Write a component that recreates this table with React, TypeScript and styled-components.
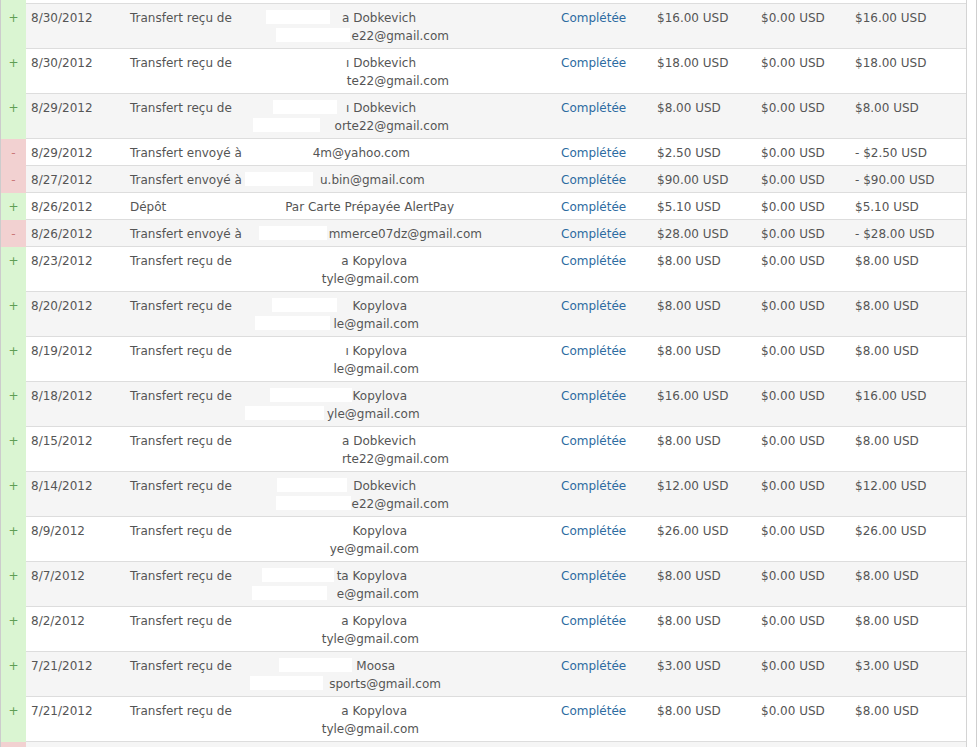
import React from 'react';
import styled, { createGlobalStyle } from 'styled-components';

const GlobalStyle = createGlobalStyle`
  html, body {
    margin: 0;
    padding: 0;
    background: #ffffff;
  }
`;

type Sign = '+' | '-';
type Mask = { w: number; gap: number };

interface PartyLine {
  text: string;
  end: number;
  mask?: Mask;
}

interface Txn {
  sign: Sign;
  date: string;
  kind: string;
  party: PartyLine[];
  amount: string;
  net: string;
}

// right edge of the party column, in page pixels
const PARTY_RIGHT = 556;
const COLUMNS = [25, 99, 120, 311, 96, 104, 94, 116];

const rows: Txn[] = [
  { sign: '+', date: '8/30/2012', kind: 'Transfert reçu de', party: [{ text: 'a Dobkevich', end: 416, mask: { w: 64, gap: 12 } }, { text: 'e22@gmail.com', end: 449, mask: { w: 74, gap: 2 } }], amount: '$16.00 USD', net: '$16.00 USD' },
  { sign: '+', date: '8/30/2012', kind: 'Transfert reçu de', party: [{ text: 'ı Dobkevich', end: 416 }, { text: 'te22@gmail.com', end: 449 }], amount: '$18.00 USD', net: '$18.00 USD' },
  { sign: '+', date: '8/29/2012', kind: 'Transfert reçu de', party: [{ text: 'ı Dobkevich', end: 416, mask: { w: 64, gap: 9 } }, { text: 'orte22@gmail.com', end: 449, mask: { w: 67, gap: 15 } }], amount: '$8.00 USD', net: '$8.00 USD' },
  { sign: '-', date: '8/29/2012', kind: 'Transfert envoyé à', party: [{ text: '4m@yahoo.com', end: 410 }], amount: '$2.50 USD', net: '- $2.50 USD' },
  { sign: '-', date: '8/27/2012', kind: 'Transfert envoyé à', party: [{ text: 'u.bin@gmail.com', end: 421, mask: { w: 68, gap: 7 } }], amount: '$90.00 USD', net: '- $90.00 USD' },
  { sign: '+', date: '8/26/2012', kind: 'Dépôt', party: [{ text: 'Par Carte Prépayée AlertPay', end: 454 }], amount: '$5.10 USD', net: '$5.10 USD' },
  { sign: '-', date: '8/26/2012', kind: 'Transfert envoyé à', party: [{ text: 'mmerce07dz@gmail.com', end: 482, mask: { w: 68, gap: 2 } }], amount: '$28.00 USD', net: '- $28.00 USD' },
  { sign: '+', date: '8/23/2012', kind: 'Transfert reçu de', party: [{ text: 'a Kopylova', end: 407 }, { text: 'tyle@gmail.com', end: 419 }], amount: '$8.00 USD', net: '$8.00 USD' },
  { sign: '+', date: '8/20/2012', kind: 'Transfert reçu de', party: [{ text: 'Kopylova', end: 407, mask: { w: 65, gap: 16 } }, { text: 'le@gmail.com', end: 419, mask: { w: 75, gap: 4 } }], amount: '$8.00 USD', net: '$8.00 USD' },
  { sign: '+', date: '8/19/2012', kind: 'Transfert reçu de', party: [{ text: 'ı Kopylova', end: 407 }, { text: 'le@gmail.com', end: 419 }], amount: '$8.00 USD', net: '$8.00 USD' },
  { sign: '+', date: '8/18/2012', kind: 'Transfert reçu de', party: [{ text: 'Kopylova', end: 407, mask: { w: 82, gap: 1 } }, { text: 'yle@gmail.com', end: 419, mask: { w: 79, gap: 3 } }], amount: '$16.00 USD', net: '$16.00 USD' },
  { sign: '+', date: '8/15/2012', kind: 'Transfert reçu de', party: [{ text: 'a Dobkevich', end: 416 }, { text: 'rte22@gmail.com', end: 449 }], amount: '$8.00 USD', net: '$8.00 USD' },
  { sign: '+', date: '8/14/2012', kind: 'Transfert reçu de', party: [{ text: 'Dobkevich', end: 416, mask: { w: 70, gap: 6 } }, { text: 'e22@gmail.com', end: 449, mask: { w: 75, gap: 1 } }], amount: '$12.00 USD', net: '$12.00 USD' },
  { sign: '+', date: '8/9/2012', kind: 'Transfert reçu de', party: [{ text: 'Kopylova', end: 407 }, { text: 'ye@gmail.com', end: 419 }], amount: '$26.00 USD', net: '$26.00 USD' },
  { sign: '+', date: '8/7/2012', kind: 'Transfert reçu de', party: [{ text: 'ta Kopylova', end: 407, mask: { w: 72, gap: 3 } }, { text: 'e@gmail.com', end: 419, mask: { w: 75, gap: 10 } }], amount: '$8.00 USD', net: '$8.00 USD' },
  { sign: '+', date: '8/2/2012', kind: 'Transfert reçu de', party: [{ text: 'a Kopylova', end: 407 }, { text: 'tyle@gmail.com', end: 419 }], amount: '$8.00 USD', net: '$8.00 USD' },
  { sign: '+', date: '7/21/2012', kind: 'Transfert reçu de', party: [{ text: 'Moosa', end: 395, mask: { w: 73, gap: 4 } }, { text: 'sports@gmail.com', end: 441, mask: { w: 73, gap: 6 } }], amount: '$3.00 USD', net: '$3.00 USD' },
  { sign: '+', date: '7/21/2012', kind: 'Transfert reçu de', party: [{ text: 'a Kopylova', end: 407 }, { text: 'tyle@gmail.com', end: 419 }], amount: '$8.00 USD', net: '$8.00 USD' },
];

const signBg = (s: Sign) => (s === '+' ? '#daf5d2' : '#f2d1d1');

const Viewport = styled.div`
  width: 977px;
  height: 747px;
  overflow: hidden;
  box-sizing: border-box;
  border-right: 1px solid #cfcfcf;
  padding-right: 8px;
  font-family: 'DejaVu Sans', 'Liberation Sans', sans-serif;
  font-size: 12px;
  color: #555555;
`;

const Table = styled.table`
  width: 967px;
  border-collapse: separate;
  border-spacing: 0;
  table-layout: fixed;
  border-left: 1px solid #cccccc;
  border-right: 1px solid #d4d4d4;
`;

const Col = styled.col<{ $w: number }>`
  width: ${p => p.$w}px;
`;

const Row = styled.tr<{ $striped: boolean }>`
  background: ${p => (p.$striped ? '#f5f5f5' : '#ffffff')};
`;

const Cell = styled.td`
  padding: 5px 5px 3px;
  line-height: 18px;
  vertical-align: top;
  border-bottom: 1px solid #dddddd;
  white-space: nowrap;
`;

const SignCell = styled(Cell)<{ $sign: Sign }>`
  padding-left: 0;
  padding-right: 0;
  text-align: center;
  background: ${p => signBg(p.$sign)};
  border-bottom-color: ${p => signBg(p.$sign)};
  color: ${p => (p.$sign === '+' ? '#5f9e55' : '#c97a7a')};
`;

/* the sliver of a neighbouring row that shows at the top and bottom edge */
const EdgeCell = styled.td<{ $h: number; $sign?: Sign }>`
  height: ${p => p.$h}px;
  padding: 0;
  font-size: 0;
  line-height: 0;
  border-bottom: 1px solid #dddddd;
  ${p => p.$sign && `background: ${signBg(p.$sign)}; border-bottom-color: ${signBg(p.$sign)};`}
`;

const PartyCell = styled(Cell)`
  padding-left: 0;
  padding-right: 0;
`;

const PartyText = styled.div<{ $end: number }>`
  text-align: right;
  padding-right: ${p => PARTY_RIGHT - p.$end}px;
  height: 18px;
`;

const Redaction = styled.span<{ $w: number; $gap: number }>`
  display: inline-block;
  width: ${p => p.$w}px;
  height: 14px;
  margin-right: ${p => p.$gap}px;
  background: #ffffff;
  vertical-align: -2px;
`;

const Status = styled(Cell)`
  color: #2c6ba1;
`;

const EdgeRow: React.FC<{ sign: Sign; striped: boolean; h: number }> = ({ sign, striped, h }) => (
  <Row $striped={striped}>
    <EdgeCell $h={h} $sign={sign} />
    <EdgeCell $h={h} colSpan={7} />
  </Row>
);

const App: React.FC = () => (
  <>
    <GlobalStyle />
    <Viewport>
      <Table>
        <colgroup>
          {COLUMNS.map((w, i) => (
            <Col key={i} $w={w} />
          ))}
        </colgroup>
        <tbody>
          <EdgeRow sign="+" striped={false} h={3} />
          {rows.map((r, i) => (
            <Row key={i} $striped={i % 2 === 0}>
              <SignCell $sign={r.sign}>{r.sign}</SignCell>
              <Cell>{r.date}</Cell>
              <Cell>{r.kind}</Cell>
              <PartyCell>
                {r.party.map((line, j) => (
                  <PartyText key={j} $end={line.end}>
                    {line.mask && <Redaction $w={line.mask.w} $gap={line.mask.gap} />}
                    {line.text}
                  </PartyText>
                ))}
              </PartyCell>
              <Status>Complétée</Status>
              <Cell>{r.amount}</Cell>
              <Cell>$0.00 USD</Cell>
              <Cell>{r.net}</Cell>
            </Row>
          ))}
          <EdgeRow sign="-" striped={true} h={26} />
        </tbody>
      </Table>
    </Viewport>
  </>
);

export default App;
